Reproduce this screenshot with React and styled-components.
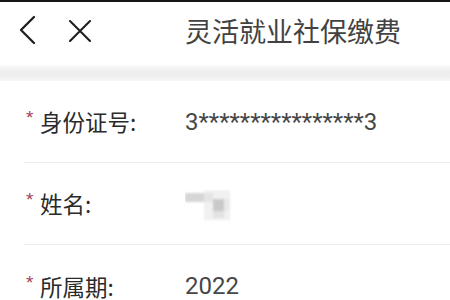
import React from "react";
import styled, { createGlobalStyle } from "styled-components";

const Global = createGlobalStyle`
  html, body { margin: 0; padding: 0; background: #ffffff; }
  body { width: 450px; height: 300px; overflow: hidden; font-family: "Noto Sans CJK SC", "Noto Sans", sans-serif; }
`;

const Page = styled.div`
  width: 450px;
  height: 300px;
  overflow: hidden;
  background: #ffffff;
  display: flex;
  flex-direction: column;
`;

const StatusEdge = styled.div`
  height: 2px;
  background: #161616;
  flex: none;
`;

const Header = styled.header`
  height: 63px;
  flex: none;
  display: flex;
  align-items: center;
  padding: 0 0 6px 18px;
  box-sizing: border-box;
  background: #fff;
`;

const IconButton = styled.div`
  display: flex;
  align-items: center;
  justify-content: center;
  margin-right: ${(p) => p.$gap || 0}px;
  margin-top: ${(p) => p.$dy || 0}px;
  color: #1f1f1f;
`;

const Title = styled.h1`
  margin: 0 0 0 ${(p) => p.$left}px;
  font-family: "Noto Sans CJK SC", sans-serif;
  font-weight: 400;
  font-size: 27px;
  line-height: 1;
  color: #424242;
`;

const Band = styled.div`
  height: 16px;
  flex: none;
  background: linear-gradient(#fafafa, #ededed 45%, #eeeeee 70%, #f8f8f8);
`;

const Row = styled.div`
  height: 82px;
  flex: none;
  margin-left: 24px;
  padding-left: 2px;
  display: flex;
  align-items: center;
  border-bottom: ${(p) => (p.$last ? "none" : "1px solid #ececec")};
  box-sizing: border-box;
`;

const Star = styled.span`
  width: 14px;
  flex: none;
  margin-top: -8px;
  font-family: "Liberation Sans", sans-serif;
  font-size: 19px;
  line-height: 1;
  color: #a8405a;
`;

const Label = styled.span`
  width: 145px;
  flex: none;
  font-family: "Noto Sans CJK SC", sans-serif;
  font-size: 22.5px;
  line-height: 1;
  color: #2a2a2a;
`;

const Value = styled.span`
  font-family: Roboto, "Noto Sans", sans-serif;
  font-size: 24px;
  line-height: 1;
  color: #474747;
`;

const Masked = styled.svg`
  display: block;
  margin-top: 4px;
`;

const BackIcon = () => (
  <svg width="18" height="30" viewBox="0 0 18 30">
    <path d="M16 2 L3 15 L16 28" fill="none" stroke="currentColor" strokeWidth="2.3" strokeLinecap="round" strokeLinejoin="round" />
  </svg>
);

const CloseIcon = () => (
  <svg width="24" height="24" viewBox="0 0 24 24">
    <path d="M2 2 L22 22 M22 2 L2 22" fill="none" stroke="currentColor" strokeWidth="2.1" strokeLinecap="round" />
  </svg>
);

const BlurredName = () => (
  <Masked width="50" height="32" viewBox="0 0 50 32">
    <defs>
      <filter id="soft" x="-20%" y="-20%" width="140%" height="140%">
        <feGaussianBlur stdDeviation="0.8" />
      </filter>
    </defs>
    <g filter="url(#soft)">
      <rect x="0" y="3" width="19" height="9" fill="#d6d6d6" />
      <rect x="19" y="0" width="26" height="30" fill="#f1f1f1" />
      <rect x="19" y="3" width="9" height="9" fill="#e4e4e4" />
      <rect x="28" y="9" width="11" height="12" fill="#c9c9c9" />
      <rect x="28" y="21" width="11" height="7" fill="#e2e2e2" />
      <rect x="39" y="9" width="6" height="12" fill="#e9e9e9" />
    </g>
  </Masked>
);

const rows = [
  { label: "身份证号:", value: <Value>3****************3</Value> },
  { label: "姓名:", value: <BlurredName /> },
  { label: "所属期:", value: <Value>2022</Value> },
];

export default function App() {
  return (
    <Page>
      <Global />
      <StatusEdge />
      <Header>
        <IconButton $gap={32} $dy={-2}>
          <BackIcon />
        </IconButton>
        <IconButton>
          <CloseIcon />
        </IconButton>
        <Title $left={93}>灵活就业社保缴费</Title>
      </Header>
      <Band />
      {rows.map((r, i) => (
        <Row key={i} $last={i === rows.length - 1}>
          <Star>*</Star>
          <Label>{r.label}</Label>
          {r.value}
        </Row>
      ))}
    </Page>
  );
}
